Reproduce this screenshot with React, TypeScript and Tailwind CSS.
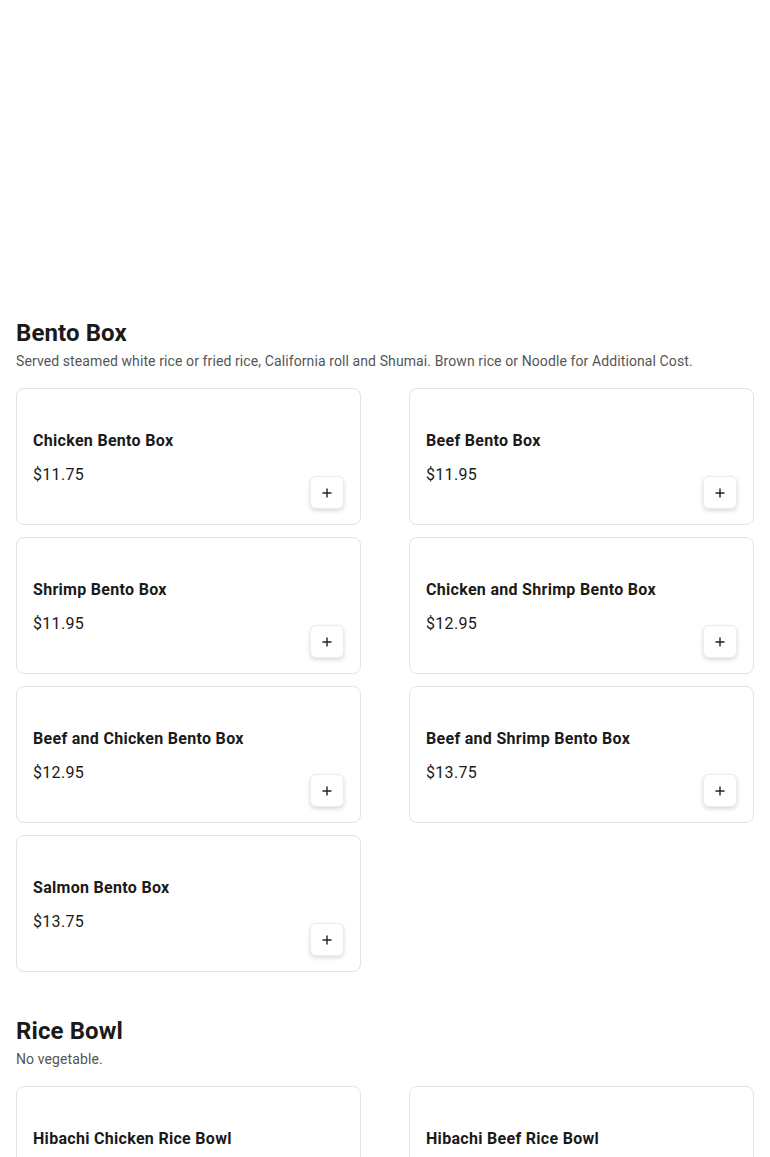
import React from "react";

type Item = { name: string; price: string };

const sections: { title: string; desc: string; items: Item[] }[] = [
  {
    title: "Bento Box",
    desc: "Served steamed white rice or fried rice, California roll and Shumai. Brown rice or Noodle for Additional Cost.",
    items: [
      { name: "Chicken Bento Box", price: "$11.75" },
      { name: "Beef Bento Box", price: "$11.95" },
      { name: "Shrimp Bento Box", price: "$11.95" },
      { name: "Chicken and Shrimp Bento Box", price: "$12.95" },
      { name: "Beef and Chicken Bento Box", price: "$12.95" },
      { name: "Beef and Shrimp Bento Box", price: "$13.75" },
      { name: "Salmon Bento Box", price: "$13.75" },
    ],
  },
  {
    title: "Rice Bowl",
    desc: "No vegetable.",
    items: [
      { name: "Hibachi Chicken Rice Bowl", price: "$9.95" },
      { name: "Hibachi Beef Rice Bowl", price: "$10.95" },
    ],
  },
];

function Card({ item }: { item: Item }) {
  return (
    <div className="flex flex-col rounded-lg border border-[#e3e3e3] bg-white px-4 pt-[40px] pb-[15px]">
      <div className="h-6 text-[16px] leading-6 font-bold text-[#1a1a1a] tracking-[0.3px]">{item.name}</div>
      <div className="mt-[10px] h-6 text-[16px] leading-6 text-[#1a1a1a] tracking-[0.3px]">{item.price}</div>
      <div className="-mt-[11px] flex justify-end">
        <button className="flex h-[33px] w-[34px] items-center justify-center rounded-md border border-[#ececec] bg-white shadow-[0_2px_4px_rgba(0,0,0,0.15)]">
          <svg width="12" height="12" viewBox="0 0 12 12">
            <path d="M6 1.5v9M1.5 6h9" stroke="#222" strokeWidth="1.4" />
          </svg>
        </button>
      </div>
    </div>
  );
}

export default function App() {
  return (
    <div className="bg-white" style={{ fontFamily: "Roboto, 'Noto Sans', sans-serif" }}>
      <div className="h-[301px]" />
      <div className="px-4">
        {sections.map((s, i) => (
          <section key={s.title} className={i === 0 ? "pt-4" : "pt-[43px]"}>
            <h2 className="text-[24px] leading-8 font-bold text-[#1a1a1a] tracking-[0.1px]">{s.title}</h2>
            <p className="mt-0.5 text-[14px] leading-5 text-[#555] tracking-[0.1px]">{s.desc}</p>
            <div className="mt-[17px] grid grid-cols-2 gap-x-[48px] gap-y-3">
              {s.items.map((it) => (
                <Card key={it.name} item={it} />
              ))}
            </div>
          </section>
        ))}
      </div>
    </div>
  );
}
